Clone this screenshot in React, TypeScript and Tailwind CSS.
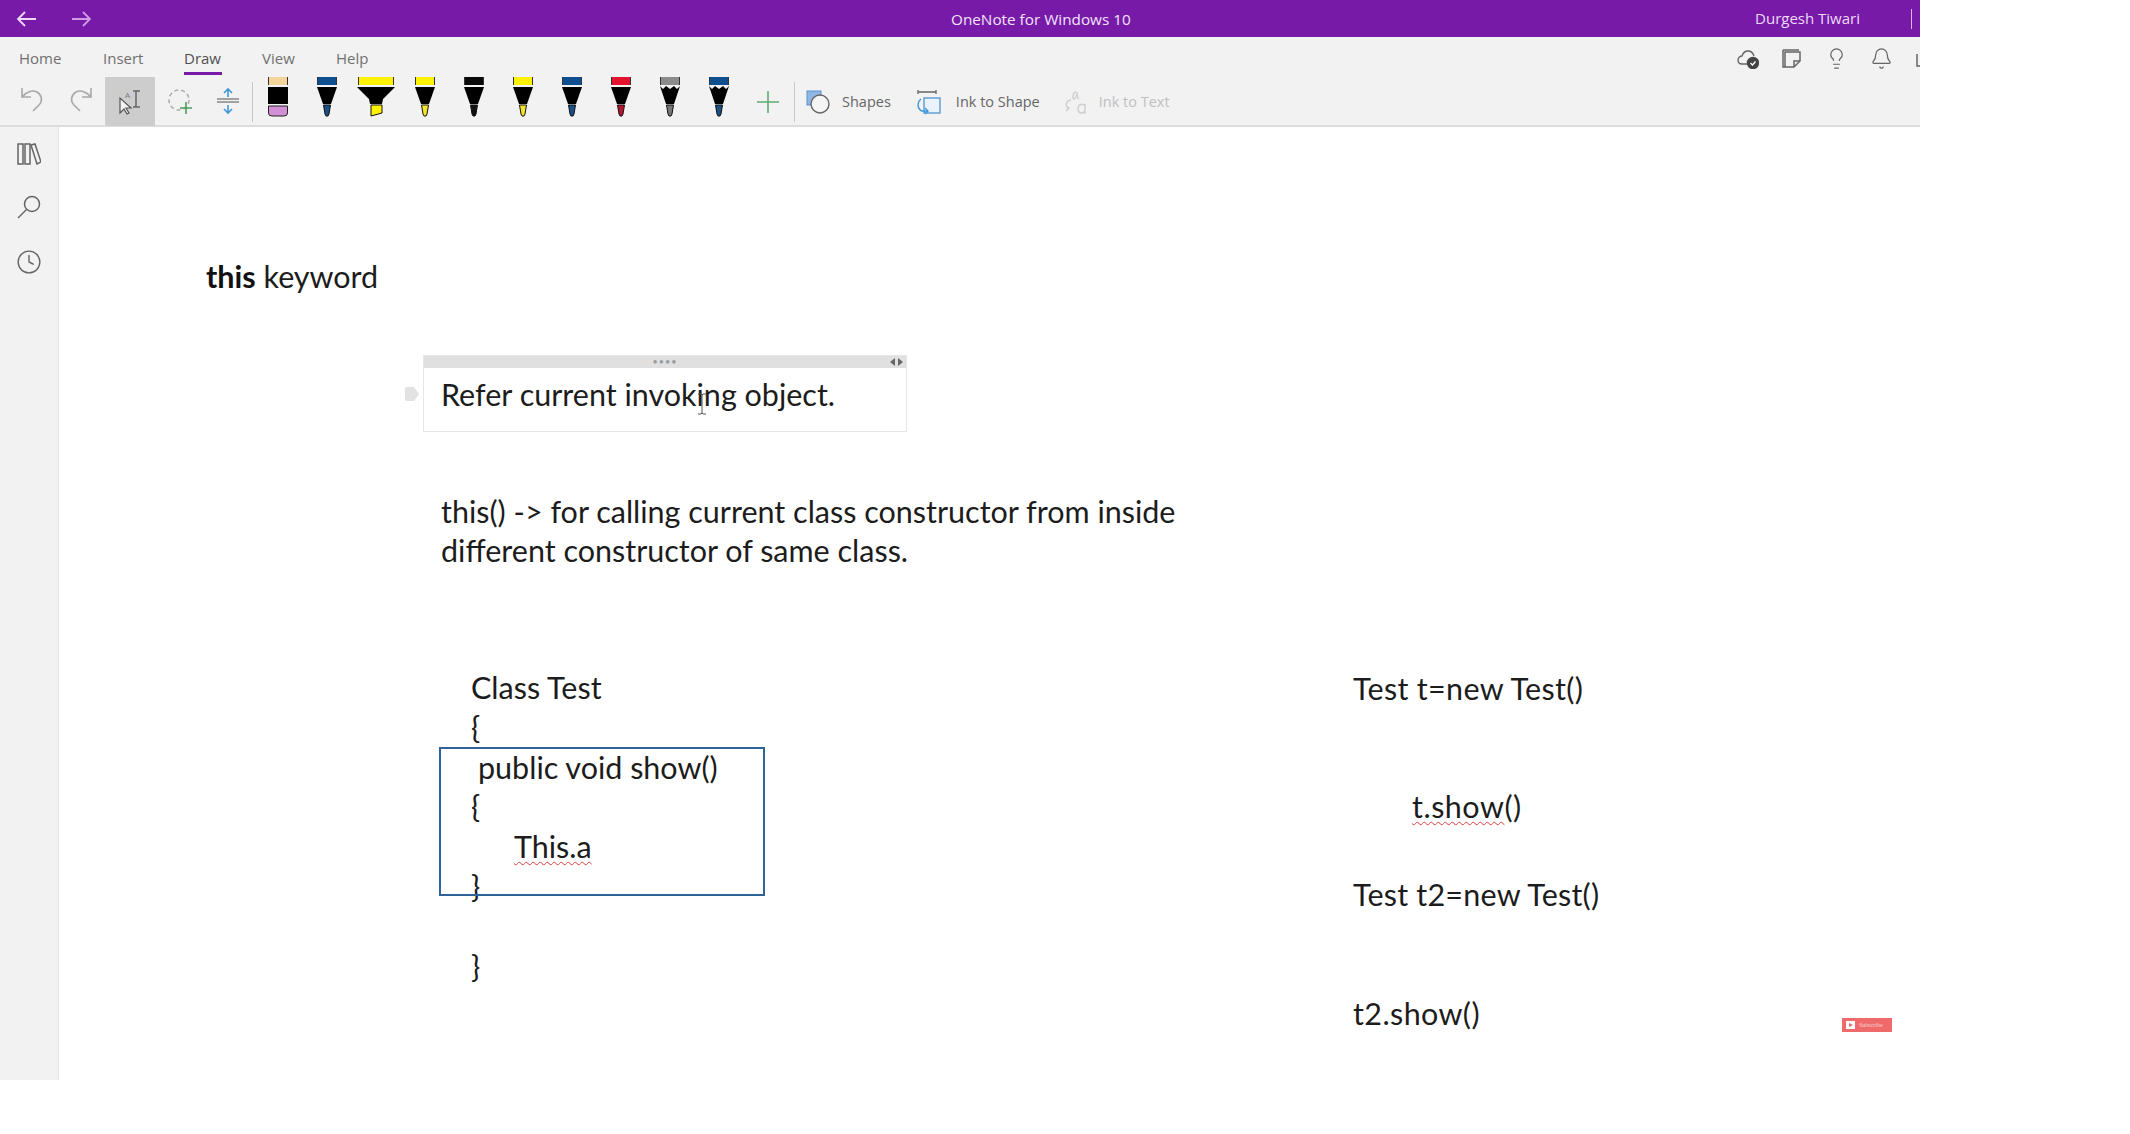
import React from "react";
import { Bell, Lightbulb, Clock } from "lucide-react";

type PenProps = { cap: string; nib: string; wide?: boolean; pencil?: boolean };

function Pen({ cap, nib, pencil }: PenProps) {
  return (
    <svg width="22" height="40" viewBox="0 0 22 40" className="shrink-0">
      <rect x="1" y="0" width="20" height="8" fill={cap} />
      <rect x="1" y="0" width="1" height="8" fill="#333" />
      <rect x="20" y="0" width="1" height="8" fill="#333" />
      {pencil ? (
        <polygon points="1,9 4,12 7,9 11,12 15,9 18,12 21,9 15,27 7,27" fill="#000" />
      ) : (
        <polygon points="1,10 21,10 15,27 7,27" fill="#000" />
      )}
      <polygon points="7.5,28 14.5,28 13,37 12,39 10,39 9,37" fill={nib} stroke="#111" strokeWidth="1" />
    </svg>
  );
}

function Highlighter() {
  return (
    <svg width="38" height="40" viewBox="0 0 38 40" className="shrink-0">
      <rect x="1" y="0" width="36" height="8" fill="#fff200" />
      <rect x="1" y="0" width="1" height="8" fill="#333" />
      <rect x="36" y="0" width="1" height="8" fill="#333" />
      <polygon points="0,10 38,10 26,22 25,27 13,27 12,22" fill="#000" />
      <polygon points="14,28 25,28 25,36 14,39" fill="#fff200" stroke="#111" strokeWidth="1" />
    </svg>
  );
}

function Eraser() {
  return (
    <svg width="22" height="40" viewBox="0 0 22 40" className="shrink-0">
      <rect x="1" y="0" width="20" height="8" fill="#f3d49b" />
      <rect x="1" y="0" width="1" height="8" fill="#333" />
      <rect x="20" y="0" width="1" height="8" fill="#333" />
      <rect x="1" y="10" width="20" height="17" fill="#000" />
      <path d="M1.5 29 H20.5 V36 Q20.5 39 17 39 H5 Q1.5 39 1.5 36 Z" fill="#d18fd8" stroke="#222" strokeWidth="1" />
    </svg>
  );
}

function Undo({ flip }: { flip?: boolean }) {
  return (
    <svg width="24" height="26" viewBox="0 0 24 26" fill="none" stroke="#a8a8a8" strokeWidth="1.6" className={flip ? "-scale-x-100" : ""}>
      <path d="M2 2 V11 H11" />
      <path d="M2 11 C7 5 13 4 17 6 C22 9 23 15 19 19 L13 25" />
    </svg>
  );
}

function RibbonAction({ icon, label, muted, wide }: { icon: React.ReactNode; label: string; muted?: boolean; wide?: boolean }) {
  return (
    <div className={wide ? "flex items-center gap-[15px]" : "flex items-center gap-[12px]"}>
      {icon}
      <span className={muted ? "text-[14.5px] text-[#c0c0c0]" : "text-[14.5px] text-[#666666]"}>{label}</span>
    </div>
  );
}

const noteLine = "block h-[39.8px] leading-[39.8px] whitespace-pre";
const spell = "underline decoration-wavy decoration-[#e23b3b] decoration-1 underline-offset-[3px]";

export default function App() {
  return (
    <div className="w-[1920px] h-[1080px] flex flex-col bg-white overflow-hidden" style={{ fontFamily: "'Open Sans', 'Noto Sans', sans-serif" }}>
      {/* Title bar */}
      <header className="h-[37px] shrink-0 bg-[#771aa8] flex items-center relative">
        <div className="flex items-center gap-[32px] pl-[16px]">
          <svg width="22" height="18" viewBox="0 0 22 18" fill="none" stroke="#f0d8f8" strokeWidth="1.8"><path d="M20 9 H2 M9 2 L2 9 L9 16" /></svg>
          <svg width="22" height="18" viewBox="0 0 22 18" fill="none" stroke="#cf9be6" strokeWidth="1.8"><path d="M2 9 H20 M13 2 L20 9 L13 16" /></svg>
        </div>
        <div className="absolute left-[951px] top-[9px] text-[15.3px] leading-[20px] text-[#f3e3fa]">OneNote for Windows 10</div>
        <div className="ml-auto flex items-center">
          <span className="text-[15px] text-[#f0d8f8] mr-[51px]">Durgesh Tiwari</span>
          <span className="w-px h-[20px] bg-[#d9b8e8] mr-[8px]" />
        </div>
      </header>

      {/* Ribbon */}
      <div className="h-[90px] shrink-0 bg-[#f2f2f2] border-b-2 border-[#dcdcdc] relative z-10 flex flex-col">
        <div className="h-[40px] shrink-0 flex items-start relative">
          <nav className="flex pl-[19px] pt-[10px] text-[15px] leading-[22px] text-[#707070]">
            <span className="w-[84px]">Home</span>
            <span className="w-[81px]">Insert</span>
            <span className="w-[78px] text-[#505050] relative font-medium">
              Draw
              <span className="absolute left-0 top-[25px] w-[38px] h-[3px] bg-[#771aa8]" />
            </span>
            <span className="w-[74px]">View</span>
            <span>Help</span>
          </nav>
          <div className="ml-auto flex items-center pt-[10px] text-[#666666]">
            <svg width="22" height="20" viewBox="0 0 22 20" fill="none" stroke="#666" strokeWidth="1.4" className="mr-[23px]">
              <path d="M12 15 H5 C2 15 1 13 1 11 C1 9 3 7 5 7 C6 4 8 2 11 2 C14 2 16 4 17 7" />
              <circle cx="16" cy="14" r="5.5" fill="#444" stroke="#444" />
              <path d="M13.5 14 L15.5 16 L18.5 12.5" stroke="#fff" strokeWidth="1.3" />
            </svg>
            <svg width="20" height="20" viewBox="0 0 20 20" fill="none" stroke="#666" strokeWidth="1.5" className="mr-[23px]">
              <path d="M1 1 H17" />
              <path d="M1 1 V18 H12 L18 12 V3 H3 V18" />
              <path d="M12 18 V12 H18" />
            </svg>
            <Lightbulb size={23} strokeWidth={1.3} color="#666" className="mr-[22px]" />
            <Bell size={23} strokeWidth={1.3} color="#666" className="mr-[23px]" />
            <svg width="16" height="20" viewBox="0 0 16 20" fill="none" stroke="#666" strokeWidth="1.5" className="mr-[-12px]">
              <path d="M1 5 V17 H16" />
              <path d="M5 13 L12 3" />
            </svg>
          </div>
        </div>
        <div className="flex-1 flex items-start">
          <div className="w-[105px] pl-[20px] pt-[9px] flex items-start gap-[25px] h-full">
            <Undo />
            <Undo flip />
          </div>
          <div className="w-[50px] h-[49px] bg-[#cdcdcd] rounded-bl-[3px] flex items-center justify-center shrink-0">
            <svg width="26" height="26" viewBox="0 0 26 26" fill="none" className="translate-x-[1px]">
              <path d="M2 9 L2 24 L6 20 L9 25 L11 24 L8 19 L13 19 Z" fill="#f2f2f2" stroke="#555" strokeWidth="1.2" />
              <text x="7" y="9" fontSize="8" fill="#777" fontFamily="Open Sans">A</text>
              <path d="M18 2 V18 M15 2 H22 M15 18 H22" stroke="#666" strokeWidth="1.5" />
            </svg>
          </div>
          <div className="w-[49px] h-full flex items-center justify-center pl-[0px] pb-[2px]">
            <svg width="26" height="26" viewBox="0 0 26 26" fill="none">
              <circle cx="12" cy="12" r="10" stroke="#aaa" strokeWidth="1.5" strokeDasharray="4 3" />
              <path d="M19 14 V26 M13 20 H25" stroke="#4a9d5e" strokeWidth="1.6" />
            </svg>
          </div>
          <div className="w-[48px] h-full flex items-center justify-center pb-[2px]">
            <svg width="24" height="28" viewBox="0 0 24 28" fill="none">
              <path d="M1 12 H23 M1 15 H23" stroke="#888" strokeWidth="1.6" />
              <path d="M12 10 V2 M8 6 L12 2 L16 6" stroke="#3f97d6" strokeWidth="1.6" />
              <path d="M12 18 V26 M8 22 L12 26 L16 22" stroke="#3f97d6" strokeWidth="1.6" />
            </svg>
          </div>
          <span className="w-px h-[40px] mt-[5px] bg-[#c8c8c8] shrink-0" />
          <div className="h-full flex items-start pl-[14px] gap-[27px]">
            <Eraser />
            <Pen cap="#104f8f" nib="#1a4f86" />
            <div className="mx-[-8px]"><Highlighter /></div>
            <Pen cap="#fff200" nib="#f5e52a" />
            <Pen cap="#0a0a0a" nib="#111111" />
            <Pen cap="#fff200" nib="#f5e52a" />
            <Pen cap="#104f8f" nib="#1a4f86" />
            <Pen cap="#e3122d" nib="#b5152c" />
            <Pen cap="#8c8c8c" nib="#777777" pencil />
            <Pen cap="#104f8f" nib="#1a4f86" pencil />
          </div>
          <svg width="22" height="22" viewBox="0 0 22 22" fill="none" stroke="#5fa976" strokeWidth="1.6" className="ml-[27px] mt-[14px] shrink-0">
            <path d="M11 0 V22 M0 11 H22" />
          </svg>
          <span className="w-px h-[40px] mt-[5px] bg-[#c8c8c8] ml-[15px] shrink-0" />
          <div className="flex items-center pl-[11px] h-[49px]">
            <RibbonAction
              label="Shapes"
              icon={
                <svg width="24" height="24" viewBox="0 0 24 24" fill="none">
                  <rect x="1" y="1" width="14" height="14" fill="#8fb6e4" stroke="#5b8fcf" />
                  <circle cx="14" cy="14" r="9" fill="#f5f5f5" stroke="#666" strokeWidth="1.4" />
                </svg>
              }
            />
            <div className="w-[26px]" />
            <RibbonAction
              wide
              label="Ink to Shape"
              icon={
                <svg width="24" height="26" viewBox="0 0 24 26" fill="none">
                  <path d="M1 1 V5 M19 1 V5 M1 3 H19" stroke="#666" strokeWidth="1.3" />
                  <rect x="7" y="9" width="16" height="15" fill="#eaf2fb" stroke="#5b9bd5" strokeWidth="1.4" />
                  <path d="M4 10 C0 13 0 20 5 22 L11 22 M8 19 L11 22 L8 25" stroke="#3f97d6" strokeWidth="1.4" />
                </svg>
              }
            />
            <div className="w-[23px]" />
            <RibbonAction
              muted
              label="Ink to Text"
              icon={
                <svg width="24" height="26" viewBox="0 0 24 26" fill="none" stroke="#cfcfcf" strokeWidth="1.4">
                  <path d="M13 3 C10 3 9 9 11 10 C13 10 14 6 14 3 C14 6 14 9 16 10" />
                  <path d="M8 11 C2 12 2 18 6 19 M3 17 L6 19 L3 22" />
                  <path d="M22 17 C20 14 15 15 15 20 C15 25 20 25 22 22 M22 15 V25" />
                </svg>
              }
            />
          </div>
        </div>
      </div>

      {/* Body */}
      <div className="flex-1 flex min-h-0">
        <aside className="w-[59px] shrink-0 bg-[#f2f2f2] border-r border-[#e4e4e4] flex flex-col items-center gap-[30px] pt-[16px]">
          <svg width="24" height="22" viewBox="0 0 24 22" fill="none" stroke="#666" strokeWidth="1.5">
            <rect x="1" y="1" width="5" height="20" />
            <rect x="8" y="1" width="5" height="20" />
            <path d="M14 2 L18 1 L24 19 L20 21 Z" />
          </svg>
          <svg width="24" height="24" viewBox="0 0 24 24" fill="none" stroke="#666" strokeWidth="1.5" >
            <circle cx="15" cy="9" r="7.5" />
            <path d="M9.5 14.5 L1 23" />
          </svg>
          <Clock size={26} strokeWidth={1.3} color="#666" />
        </aside>

        <main className="flex-1 relative text-[30.5px] text-[#1c1c1c]" style={{ fontFamily: "Lato, 'Open Sans', sans-serif" }}>
          <div className="absolute left-[147px] top-[129px] leading-[40px]">
            <b className="font-bold text-[#111]">this</b> keyword
          </div>

          {/* Selected note */}
          <svg width="15" height="14" viewBox="0 0 15 14" className="absolute left-[346px] top-[260px]">
            <path d="M2 0 H9 L14 7 L9 14 H2 Q0 14 0 12 V2 Q0 0 2 0 Z" fill="#e2e2e2" />
          </svg>
          <div className="absolute left-[364px] top-[228px] w-[484px] h-[77px] border border-[#e6e6e6] bg-white">
            <div className="h-[12px] bg-[#e0e0e0] relative flex items-center justify-center">
              <span className="text-[9px] leading-[10px] tracking-[1px] text-[#999]">••••</span>
              <span className="absolute right-[3px] top-[2px] flex gap-[3px]">
                <svg width="5" height="8" viewBox="0 0 5 8"><path d="M5 0 L0 4 L5 8 Z" fill="#666" /></svg>
                <svg width="5" height="8" viewBox="0 0 5 8"><path d="M0 0 L5 4 L0 8 Z" fill="#666" /></svg>
              </span>
            </div>
            <div className="pl-[17px] pt-[6px] leading-[40px]">Refer current invoking object.</div>
          </div>
          <svg width="10" height="22" viewBox="0 0 10 22" fill="none" stroke="#555" strokeWidth="1" className="absolute left-[638px] top-[266px]">
            <path d="M1 1 H4 L5 2 L6 1 H9 M5 2 V20 M1 21 H4 L5 20 L6 21 H9" />
          </svg>

          <div className="absolute left-[382px] top-[365px]">
            <span className="block h-[39.4px] leading-[39.4px] whitespace-pre">this() -&gt; for calling current class constructor from inside</span>
            <span className="block h-[39.4px] leading-[39.4px] whitespace-pre">different constructor of same class.</span>
          </div>

          {/* Code note */}
          <div className="absolute left-[412px] top-[541px]">
            <span className={noteLine}>Class Test</span>
            <span className={noteLine}>{"{"}</span>
            <span className={noteLine + " pl-[7px]"}>public void show()</span>
            <span className={noteLine}>{"{"}</span>
            <span className={noteLine + " pl-[43px]"}><span className={spell}>This.a</span></span>
            <span className={noteLine}>{"}"}</span>
            <span className={noteLine}> </span>
            <span className={noteLine}>{"}"}</span>
          </div>
          <div className="absolute left-[380px] top-[620px] w-[326px] h-[149px] border-2 border-[#2f6399]" />

          <div className="absolute left-[1294px] top-[541px] leading-[40px] tracking-[0.3px]">Test t=new Test()</div>
          <div className="absolute left-[1353px] top-[659px] leading-[40px] tracking-[0.5px]"><span className={spell}>t.show</span>()</div>
          <div className="absolute left-[1294px] top-[747px] leading-[40px] tracking-[0.2px]">Test t2=new Test()</div>
          <div className="absolute left-[1294px] top-[866px] leading-[40px] tracking-[0.4px]">t2.show()</div>

          {/* Subscribe badge */}
          <div className="absolute left-[1783px] top-[891px] w-[50px] h-[14px] bg-[#ef6a6a] flex items-center gap-[4px] pl-[4px]">
            <span className="w-[9px] h-[8px] bg-white flex items-center justify-center">
              <svg width="4" height="4" viewBox="0 0 4 4"><path d="M0 0 L4 2 L0 4 Z" fill="#ef6a6a" /></svg>
            </span>
            <span className="text-[6px] leading-[8px] text-[#fbd6d6]" style={{ fontFamily: "'Liberation Serif', serif" }}>Subscribe</span>
          </div>
        </main>
      </div>
    </div>
  );
}
